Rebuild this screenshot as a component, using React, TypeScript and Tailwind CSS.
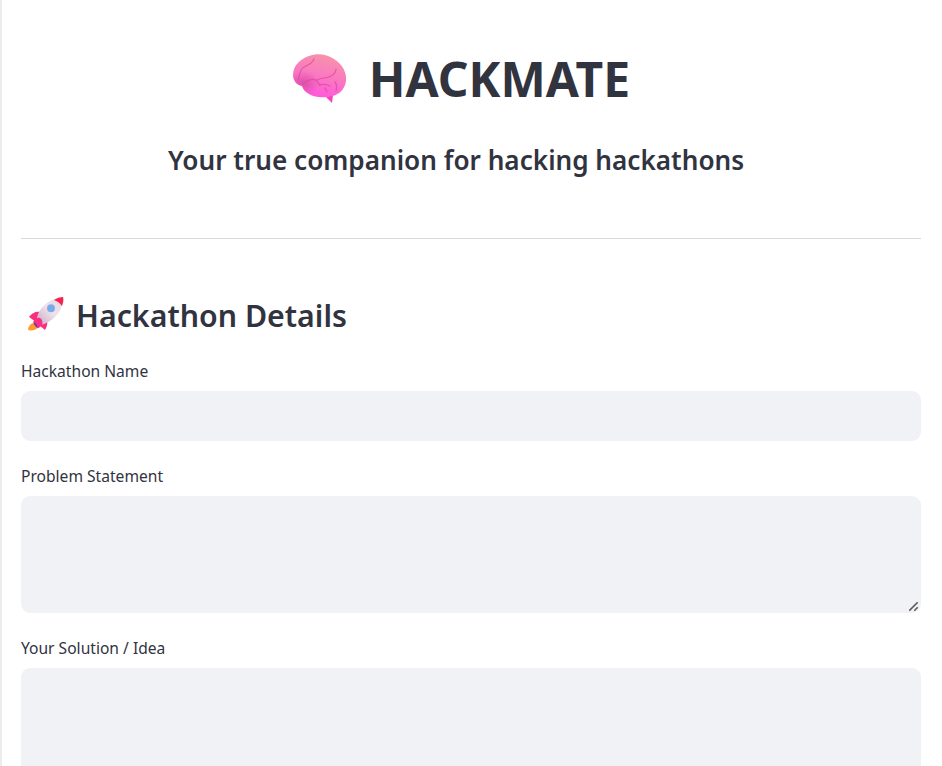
const fontClass = "font-['Noto_Sans','Open_Sans',sans-serif]";

function BrainIcon() {
  const outline = "M4 23C4 13 13 6 20 4C28 1 38 2 45 7C53 12 58 20 57 29C56 37 50 43 43 44C36 46 26 46 20 42C16 40 14 37 13 34C8 33 4 29 4 23z";
  return (
    <svg width="58" height="54" viewBox="0 0 58 54" className="block">
      <defs>
        <linearGradient id="brainFill" x1="0.75" y1="0" x2="0.45" y2="1">
          <stop offset="0" stopColor="#f795a8" />
          <stop offset="0.5" stopColor="#fa7ac0" />
          <stop offset="1" stopColor="#ff58dc" />
        </linearGradient>
        <radialGradient id="brainShade" cx="0.2" cy="0.68" r="0.3">
          <stop offset="0" stopColor="#c8408f" stopOpacity="0.6" />
          <stop offset="1" stopColor="#c8408f" stopOpacity="0" />
        </radialGradient>
      </defs>
      <path d="M37 45l7-2-1 8z" fill="#fb3fb8" />
      <path d={outline} fill="url(#brainFill)" />
      <path d={outline} fill="url(#brainShade)" />
      <g fill="none" stroke="#dd4a98" strokeWidth="1.2" strokeLinecap="round" opacity="0.75">
        <path d="M9 28C11 22 11 17 15 15C19 13 23 12 25 7" />
        <path d="M16 30C21 27 25 26 28 29C30 31 31 32 31 34" />
        <path d="M28 28C33 25 38 27 42 24C46 22 47 20 47 17" />
        <path d="M30 33C35 32 38 32 41 34M46 30C48 32 48 35 47 39M36 36L38 40" />
      </g>
    </svg>
  );
}

function RocketIcon() {
  return (
    <svg width="38" height="38" viewBox="0 0 38 38" className="block">
      <defs>
        <linearGradient id="rocketBody" x1="0" y1="1" x2="1" y2="0">
          <stop offset="0" stopColor="#c9a9c6" />
          <stop offset="0.55" stopColor="#eee3ec" />
          <stop offset="1" stopColor="#e4d8e4" />
        </linearGradient>
      </defs>
      <path d="M2 33C2 30 4 27 7 26L11 31C10 33 6 34 2 33z" fill="#ff9a2e" />
      <path d="M3 20C6 16 10 14 14 15L10 25z" fill="#f9307f" />
      <path d="M19 33C21 30 22 26 21 21L13 28z" fill="#f9307f" />
      <path d="M11 25C10 18 15 9 24 4C29 1 33 1 36 2C37 7 35 14 30 19C25 24 19 27 15 28z" fill="url(#rocketBody)" />
      <path d="M28 3C31 1 34 0 37 0C38 3 37 6 36 9C34 6 31 4 28 3z" fill="#f5244f" />
      <path d="M7 25C9 22 12 20 14 21C16 22 17 25 16 28C14 30 12 32 11 31z" fill="#fb2f84" />
      <circle cx="25" cy="11.3" r="4" fill="#9aa5d6" />
      <circle cx="25" cy="11.3" r="2.9" fill="#62b2f5" />
      <path d="M8 26L11 30" stroke="#5a3f8f" strokeWidth="1.5" />
    </svg>
  );
}

function ResizeGrip() {
  return (
    <svg width="10" height="10" viewBox="0 0 10 10" className="absolute right-[2px] bottom-[1px] pointer-events-none">
      <path d="M0.3 8.7L8.7 0.3M5.3 8.7L8.7 5.3" stroke="#5a5a5f" strokeWidth="1.6" />
    </svg>
  );
}

function Field({ label, children }: { label: string; children: React.ReactNode }) {
  return (
    <div className="mb-[25px]">
      <label className="block h-[30px] text-[15.6px] leading-[20px] text-[#31333f]">{label}</label>
      {children}
    </div>
  );
}

export default function App() {
  return (
    <div className={`h-screen overflow-hidden bg-white border-l-2 border-[#ececec] pl-[19px] pr-[21px] text-[#31333f] ${fontClass}`}>
      <header className="pt-[46px] text-center">
        <div className="flex items-center justify-center gap-[22px] pr-[23px] h-[66px]">
          <BrainIcon />
          <h1 className="text-[48px] leading-[66px] font-bold">HACKMATE</h1>
        </div>
        <p className="mt-[30px] pr-[30px] text-[26.15px] leading-[36px] font-semibold">Your true companion for hacking hackathons</p>
      </header>
      <hr className="mt-[60px] border-[#d9d9dc]" />
      <h2 className="mt-[55px] mb-[23px] flex items-center gap-[12px] pl-[5px] h-[44px] text-[30.3px] leading-[44px] font-semibold">
        <RocketIcon />
        Hackathon Details
      </h2>
      <Field label="Hackathon Name">
        <input type="text" className="block w-full h-[50px] rounded-[9px] bg-[#f0f2f6] outline-none" />
      </Field>
      <Field label="Problem Statement">
        <div className="relative">
          <textarea className="block w-full h-[117px] rounded-[9px] bg-[#f0f2f6] outline-none resize-none" />
          <ResizeGrip />
        </div>
      </Field>
      <Field label="Your Solution / Idea">
        <textarea className="block w-full h-[200px] rounded-[9px] bg-[#f0f2f6] outline-none resize-none" />
      </Field>
    </div>
  );
}
